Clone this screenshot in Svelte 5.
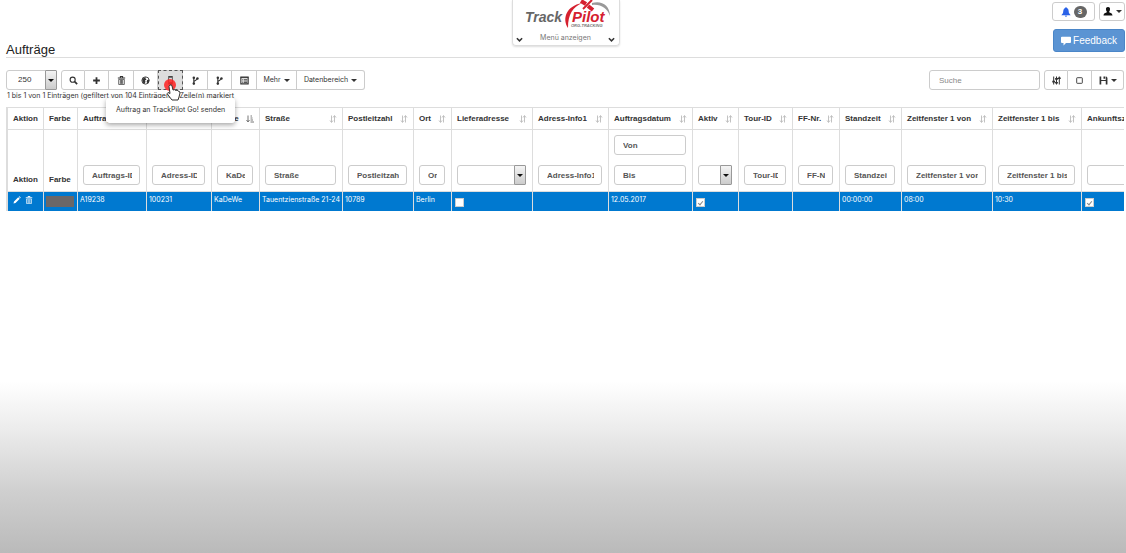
<script>
  let columns = [
    { label: "Aktion", width: 36, cell: "actions" },
    { label: "Farbe", width: 34, cell: "color" },
    { label: "Auftrags-ID", width: 69, filter: "text", sort: "none", value: "A19238" },
    { label: "Adress-ID", width: 65, filter: "text", sort: "none", value: "100231" },
    { label: "KaDe", head: "Name", width: 48, filter: "text", sort: "asc", value: "KaDeWe" },
    { label: "Straße", width: 83, filter: "text", sort: "none", value: "Tauentzienstraße 21-24" },
    { label: "Postleitzahl", width: 71, filter: "text", sort: "none", value: "10789" },
    { label: "Ort", width: 38, filter: "text", sort: "none", value: "Berlin" },
    { label: "Lieferadresse", width: 81, filter: "select", sort: "none", cell: "check", value: false },
    { label: "Adress-Info1", width: 76, filter: "text", sort: "none", value: "" },
    { label: "Auftragsdatum", width: 84, filter: "range", sort: "none", value: "12.05.2017" },
    { label: "Aktiv", width: 46, filter: "select", sort: "none", cell: "check", value: true },
    { label: "Tour-ID", width: 54, filter: "text", sort: "none", value: "" },
    { label: "FF-Nr.", width: 47, filter: "text", sort: "none", value: "" },
    { label: "Standzeit", width: 62, filter: "text", sort: "none", value: "00:00:00" },
    { label: "Zeitfenster 1 von", width: 91, filter: "text", sort: "none", value: "08:00" },
    { label: "Zeitfenster 1 bis", width: 89, filter: "text", sort: "none", value: "10:30" },
    { label: "Ankunftszeit", width: 90, filter: "select", sort: "none", cell: "check", value: true },
  ];
  let tableWidth = columns.reduce((sum, c) => sum + c.width, 0);

  let tools = [
    { icon: "search", title: "Suchen", width: 24 },
    { icon: "plus", title: "Neu", width: 24 },
    { icon: "trash", title: "Löschen", width: 25 },
    { icon: "globe", title: "Karte", width: 24 },
    { icon: "phone", title: "Auftrag an TrackPilot Go! senden", width: 25, active: true },
    { icon: "branch", title: "Tour zuweisen", width: 25 },
    { icon: "branch", title: "Tour planen", width: 24 },
    { icon: "list", title: "Liste", width: 25 },
  ];
</script>

{#snippet icon(name)}
  <svg class="icon" viewBox="0 0 16 16" aria-hidden="true">
    {#if name === "search"}
      <circle cx="6.5" cy="6.5" r="4.5" fill="none" stroke="currentColor" stroke-width="2" />
      <path d="M10 10l4.5 4.5" stroke="currentColor" stroke-width="3" />
    {:else if name === "plus"}
      <path d="M8 2v12M2 8h12" stroke="currentColor" stroke-width="3.2" />
    {:else if name === "trash"}
      <path d="M6 2.500V1h4v1.500M1.500 3.500h13" fill="none" stroke="currentColor" stroke-width="1.800" />
      <path d="M3 6h10v9H3zM6 7v7M8 7v7M10 7v7" fill="none" stroke="currentColor" stroke-width="1.300" />
    {:else if name === "globe"}
      <circle cx="8" cy="8" r="6.500" fill="none" stroke="currentColor" stroke-width="1.500" />
      <path d="M2 6l3-3 4-1-1 3 2 1-3 2 1 2-2 4-3-3zM11 7l4-1-1 5-3 2-1-3z" fill="currentColor" />
    {:else if name === "phone"}
      <path d="M4 0h8v15H4z" fill="#444" />
      <path d="M5.500 3h5v8h-5z" fill="#ddd" />
    {:else if name === "branch"}
      <path d="M5 15V2M5 11c0-4 6-2 6-7" fill="none" stroke="currentColor" stroke-width="2" />
      <circle cx="5" cy="3" r="2.200" fill="currentColor" />
      <circle cx="5" cy="13.500" r="2.200" fill="currentColor" />
      <circle cx="11.500" cy="4.500" r="2.200" fill="currentColor" />
    {:else if name === "list"}
      <path d="M1.500 2h13v12h-13z" fill="none" stroke="currentColor" stroke-width="2" />
      <path d="M1 3h14M4 6.500h2M7 6.500h6M4 9h2M7 9h6M4 11.500h2M7 11.500h6" stroke="currentColor" stroke-width="1.500" />
    {:else if name === "sliders"}
      <path d="M3 1v14M8 1v14M13 1v14" stroke="currentColor" stroke-width="1.800" />
      <path d="M.5 10h5M5.500 5h5M5.500 12h5M10.500 4h5" stroke="currentColor" stroke-width="3" />
    {:else if name === "square"}
      <rect x="3" y="3" width="10" height="10" rx="1" fill="none" stroke="currentColor" stroke-width="1.600" />
    {:else if name === "save"}
      <path d="M1 1h3v6h8V1h1l2 2v12h-3V9H4v6H1zM8 1h3v4H8z" fill="currentColor" />
    {:else if name === "bell"}
      <path d="M8 0l1.500 1.500C13 3 12 8 13 10l2.500 3H.5L3 10c1-2 0-7 3.500-8.500zM6 14h4l-2 2z" fill="currentColor" />
    {:else if name === "user"}
      <path d="M8 0c3 0 4 2 3.500 4.500C11.500 7 10 8 10 9s5.500 1.500 6 6H0c.5-4.500 6-5 6-6S4.500 7 4.500 4.500C4 2 5 0 8 0z" fill="currentColor" />
    {:else if name === "comment"}
      <path d="M1.500 1h13q1.500 0 1.500 1.500v7q0 1.500-1.500 1.500H8l-4 4v-4H1.500Q0 11 0 9.500v-7Q0 1 1.500 1z" fill="currentColor" />
    {:else if name === "pencil"}
      <path d="M1 15l1-4 8.500-8.500 3 3L5 14zM11.500 1.500l1.500-1 2.500 2.500-1 1.500z" fill="currentColor" />
    {:else if name === "chevron"}
      <path d="M2 5l6 6 6-6" fill="none" stroke="currentColor" stroke-width="3.500" />
    {:else if name === "asc"}
      <path d="M4 1v12M1 10l3 4 3-4M9 2h3M9 6h4M9 10h5M9 14h7" fill="none" stroke="currentColor" stroke-width="1.800" />
    {:else}
      <path d="M5 1v13M2 11l3 4 3-4M11 15V2M8 5l3-4 3 4" fill="none" stroke="currentColor" stroke-width="1.800" />
    {/if}
  </svg>
{/snippet}

<div class="page">
  <header>
    <h1>Aufträge</h1>
    <div class="menu">
      <svg class="logo" viewBox="0 0 88 30" role="img" aria-label="TrackPilot ORG-TRACKING">
        <path d="M60 3C51 7 46 14 46 28C40 19 44 6 60 3z" fill="#d5202f" />
        <path d="M70 3c9-3 18 2 18 13C85 8 79 4 70 5z" fill="#999" />
        <path d="M59 1l5 3M66 6l5 4" stroke="#d5202f" stroke-width="4" />
        <path d="M70 0l-9 9" stroke="#d5202f" stroke-width="2" />
        <text x="3" y="22" font-size="14" fill="#666">Track</text>
        <text x="50" y="22" font-size="15" fill="#d5202f">Pilot</text>
        <text x="49" y="27" font-size="4" fill="#777">ORG-TRACKING</text>
      </svg>
      <button class="menu-toggle">
        {@render icon("chevron")}
        <span>Menü anzeigen</span>
        {@render icon("chevron")}
      </button>
    </div>
    <div class="account">
      <div class="account-row">
        <button class="btn bell" aria-label="Benachrichtigungen">
          {@render icon("bell")}<span class="badge">3</span>
        </button>
        <button class="btn user" aria-label="Benutzer">
          {@render icon("user")}<i class="caret"></i>
        </button>
      </div>
      <button class="feedback">{@render icon("comment")}Feedback</button>
    </div>
  </header>

  <main>
    <div class="toolbar">
      <span class="select page-size">
        <select aria-label="Einträge pro Seite"><option>250</option></select>
        <span class="arrow"><i class="caret"></i></span>
      </span>
      <div class="group">
        {#each tools as tool}
          <button class="btn" class:active={tool.active} style="width: {tool.width}px" aria-label={tool.title}>
            {@render icon(tool.icon)}
            {#if tool.active}
              <span class="pointer">
                <svg viewBox="0 0 20 24" aria-hidden="true">
                  <circle cx="7" cy="7" r="6" fill="#f22" opacity="0.85" />
                  <path
                    d="M7 7q1.500-1 2 1l1 4q2-1 2.500.5 2-1 2.500.5 2 0 2 2l-1 4-1 3H9l-4-5q-1.500-2 0-2.500l2 1-1-7z"
                    fill="#fff"
                    stroke="#333"
                  />
                </svg>
              </span>
              <span class="tooltip" role="tooltip">{tool.title}</span>
            {/if}
          </button>
        {/each}
        <button class="btn more">Mehr <i class="caret"></i></button>
        <button class="btn range">Datenbereich <i class="caret"></i></button>
      </div>
      <input class="search" type="text" placeholder="Suche" aria-label="Suche" />
      <div class="group">
        <button class="btn small" aria-label="Spalten">{@render icon("sliders")}</button>
        <button class="btn small" aria-label="Auswahl">{@render icon("square")}</button>
        <button class="btn save" aria-label="Speichern">{@render icon("save")}<i class="caret"></i></button>
      </div>
    </div>
    <p class="info">1 bis 1 von 1 Einträgen (gefiltert von 104 Einträgen) 1 Zeile(n) markiert</p>

    <div class="table-wrap">
      <table style="width: {tableWidth}px">
        <colgroup>
          {#each columns as col}
            <col style="width: {col.width}px" />
          {/each}
        </colgroup>
        <thead>
          <tr class="titles">
            {#each columns as col}
              <th>
                <div class="title">
                  <span>{col.head ?? col.label}</span>
                  {#if col.sort}
                    <span class="sort" class:sorted={col.sort === "asc"}>{@render icon(col.sort === "asc" ? "asc" : "sort")}</span>
                  {/if}
                </div>
              </th>
            {/each}
          </tr>
          <tr class="filters">
            {#each columns as col}
              <th>
                {#if col.filter === "text"}
                  <input type="text" placeholder={col.label} aria-label={col.label} />
                {:else if col.filter === "range"}
                  <input class="from" type="text" placeholder="Von" aria-label="{col.label} von" />
                  <input type="text" placeholder="Bis" aria-label="{col.label} bis" />
                {:else if col.filter === "select"}
                  <span class="select">
                    <select aria-label={col.label}><option></option></select>
                    <span class="arrow"><i class="caret"></i></span>
                  </span>
                {:else}
                  <span class="plain">{col.label}</span>
                {/if}
              </th>
            {/each}
          </tr>
        </thead>
        <tbody>
          <tr>
            {#each columns as col}
              <td>
                {#if col.cell === "actions"}
                  <span class="actions">
                    <button aria-label="Bearbeiten">{@render icon("pencil")}</button>
                    <button aria-label="Löschen">{@render icon("trash")}</button>
                  </span>
                {:else if col.cell === "color"}
                  <span class="swatch"></span>
                {:else if col.cell === "check"}
                  <input type="checkbox" checked={col.value} aria-label={col.label} />
                {:else}
                  {col.value}
                {/if}
              </td>
            {/each}
          </tr>
        </tbody>
      </table>
    </div>
  </main>
</div>

<style>
  :global(body) {
    margin: 0;
  }

  .page {
    box-sizing: border-box;
    min-height: 100vh;
    overflow: hidden;
    background: linear-gradient(#fff 69%, #ebebeb 78%, #cfcfcf 89%, #bababa);
    color: #333;
    font-family: "Liberation Sans", Arial, sans-serif;
    font-size: 8px;
    line-height: 12px;
  }

  button,
  input,
  select {
    box-sizing: border-box;
    margin: 0;
    padding: 0;
    font: inherit;
    color: inherit;
  }

  button {
    cursor: pointer;
  }

  .icon {
    display: block;
    flex: none;
    width: 8px;
    height: 8px;
  }

  .caret {
    flex: none;
    border: 3px solid transparent;
    border-top-color: currentColor;
    border-bottom: 0;
  }

  header {
    display: grid;
    grid-template-columns: 1fr 108px 1fr;
    margin: 0 1px 0 6px;
    border-bottom: 1px solid #ddd;
  }

  .menu-toggle,
  .tooltip,
  .info,
  .more,
  .range,
  td {
    font-family: Inter, "Liberation Sans", Arial, sans-serif;
    font-size: 7px;
  }

  h1 {
    align-self: end;
    margin: 0;
    font-size: 13px;
    line-height: 15px;
    font-weight: normal;
    color: #222;
  }

  .menu {
    box-sizing: border-box;
    align-self: start;
    height: 46px;
    border: 1px solid #ddd;
    border-top: 0;
    border-radius: 0 0 4px 4px;
    box-shadow: 0 1px 2px #ddd;
  }

  .logo {
    display: block;
    width: 88px;
    height: 30px;
    margin: 0 auto;
    font-weight: bold;
    font-style: italic;
  }

  .menu-toggle {
    display: flex;
    align-items: center;
    justify-content: space-between;
    width: 100%;
    padding: 2px 3px 0;
    border: 0;
    background: none;
    color: #777;
  }

  .menu-toggle .icon {
    width: 7px;
    height: 7px;
    margin-top: 3px;
    color: #333;
  }

  .account {
    display: flex;
    flex-direction: column;
    align-items: flex-end;
    gap: 8px;
    padding: 2px 0 5px;
  }

  .account-row {
    display: flex;
    gap: 4px;
  }

  .btn {
    position: relative;
    display: flex;
    align-items: center;
    justify-content: center;
    gap: 3px;
    height: 20px;
    border: 1px solid #ccc;
    background: #fff;
  }

  .btn .icon {
    width: 9px;
    height: 9px;
  }

  .account .btn {
    height: 19px;
    border-radius: 3px;
  }

  .bell {
    width: 43px;
  }

  .bell .icon {
    width: 10px;
    height: 10px;
    color: #2a62e8;
  }

  .badge {
    width: 13px;
    border-radius: 7px;
    background: #666;
    color: #fff;
    font-weight: bold;
  }

  .user {
    width: 26px;
  }

  .user .icon {
    width: 10px;
    height: 9px;
    color: #111;
  }

  .feedback {
    display: flex;
    align-items: center;
    justify-content: center;
    gap: 2px;
    width: 72px;
    height: 23px;
    border: 1px solid #4a86c8;
    border-radius: 3px;
    background: #5b94d3;
    color: #fff;
    font-size: 10px;
  }

  .feedback .icon {
    width: 10px;
    height: 10px;
  }

  main {
    padding: 12px 2px 0 6px;
  }

  .toolbar {
    display: flex;
    gap: 4px;
  }

  .group {
    display: flex;
  }

  .group .btn + .btn {
    border-left: 0;
  }

  .group .btn:first-child {
    border-radius: 3px 0 0 3px;
  }

  .group .btn:last-child {
    border-radius: 0 3px 3px 0;
  }

  .group .btn.active {
    background: #ddd;
    outline: 1px dashed #555;
    outline-offset: -1px;
    z-index: 1;
  }

  .pointer {
    position: absolute;
    z-index: 2;
    top: 7px;
    left: 5px;
    width: 20px;
    height: 24px;
  }

  .tooltip {
    position: absolute;
    top: 27px;
    left: -52px;
    padding: 6px 10px 7px;
    border-radius: 3px;
    background: #fff;
    box-shadow: 0 2px 5px rgba(0, 0, 0, 0.35);
    white-space: nowrap;
  }

  .more {
    width: 40px;
  }

  .range {
    width: 68px;
  }

  .small {
    width: 24px;
  }

  .save {
    width: 32px;
  }

  .search,
  .filters input,
  .select select {
    height: 20px;
    border: 1px solid #ccc;
    border-radius: 3px;
    background: #fff;
  }

  .search {
    width: 111px;
    margin-left: auto;
    padding: 0 9px;
  }

  .search::placeholder {
    color: #888;
    opacity: 1;
  }

  .select {
    position: relative;
    display: block;
  }

  .select select {
    display: block;
    width: 100%;
    padding: 0 11px;
    appearance: none;
  }

  .select .arrow {
    position: absolute;
    top: 0;
    right: 0;
    bottom: 0;
    display: flex;
    align-items: center;
    justify-content: center;
    box-sizing: border-box;
    width: 12px;
    border: 1px solid #999;
    border-radius: 1px;
    background: linear-gradient(#f4f4f4, #ccc);
    color: #111;
    pointer-events: none;
  }

  .page-size {
    width: 51px;
  }

  .info {
    margin: 0 0 5px 1px;
  }

  .table-wrap {
    overflow: hidden;
  }

  table {
    table-layout: fixed;
    border-collapse: separate;
    border-spacing: 0;
    border-left: 2px solid #ddd;
  }

  th,
  td {
    box-sizing: border-box;
    overflow: hidden;
    white-space: nowrap;
    text-align: left;
    border-right: 1px solid #ddd;
  }

  th {
    padding: 0 6px 0 5px;
    border-bottom: 1px solid #ddd;
  }

  .titles th {
    height: 23px;
    border-top: 1px solid #ddd;
  }

  .title {
    display: flex;
    justify-content: space-between;
  }

  .sort {
    align-self: center;
    margin-right: -1px;
    color: #bbb;
  }

  .sorted {
    color: #666;
  }

  .filters th {
    height: 62px;
    padding-bottom: 6px;
    vertical-align: bottom;
  }

  .filters input {
    display: block;
    width: 100%;
    padding: 0 7px 0 8px;
  }

  .filters .from {
    margin-bottom: 10px;
  }

  .filters input::placeholder {
    color: #555;
    opacity: 1;
  }

  .filters .plain {
    display: block;
    margin-bottom: -1px;
  }

  td {
    height: 19px;
    padding: 0 0 3px 2px;
    background: #0079d0;
    color: #fff;
  }

  .actions {
    display: flex;
    gap: 4px;
    padding-left: 3px;
  }

  .actions button {
    border: 0;
    background: none;
  }

  .swatch {
    display: block;
    width: 28px;
    height: 11px;
    margin-top: 2px;
    background: #6b6768;
  }

  td input {
    display: grid;
    place-items: center;
    width: 9px;
    height: 9px;
    margin: 4px 0 0 1px;
    appearance: none;
    border: 1px solid #ccc;
    background: #fff;
  }

  td input:checked::before {
    content: "";
    width: 2px;
    height: 4px;
    border: solid #888;
    border-width: 0 1px 1px 0;
    transform: rotate(40deg);
  }
</style>
